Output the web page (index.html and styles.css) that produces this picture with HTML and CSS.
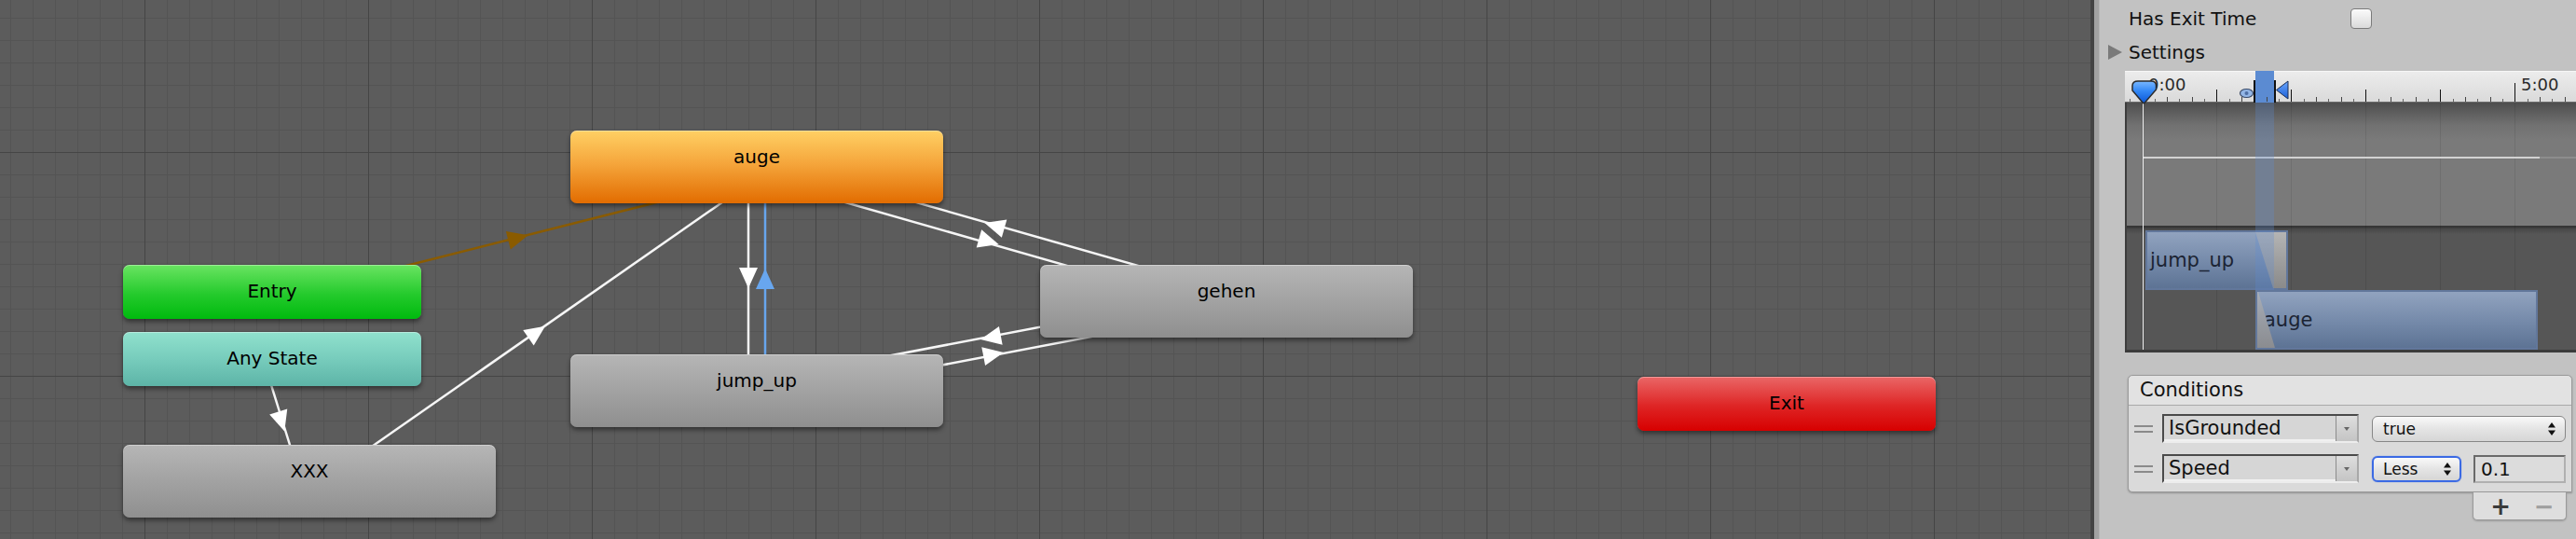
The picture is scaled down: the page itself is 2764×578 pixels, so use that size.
FILE: index.html
```html
<!DOCTYPE html>
<html>
<head>
<meta charset="utf-8">
<title>Animator</title>
<link rel="stylesheet" href="styles.css">
</head>
<body>
<div class="graph">
  <svg class="edges" width="2243" height="578" viewBox="0 0 2243 578">
    <g class="line-white">
      <line x1="287" y1="400" x2="315" y2="490"/>
      <line x1="383" y1="490" x2="792" y2="205"/>
      <line x1="803" y1="200" x2="803" y2="400"/>
      <line x1="809" y1="189" x2="1313" y2="333"/>
      <line x1="815" y1="169" x2="1319" y2="313"/>
      <line x1="810" y1="409" x2="1314" y2="313"/>
      <line x1="814" y1="429" x2="1318" y2="333"/>
    </g>
    <line class="line-brown" x1="400" y1="294" x2="760" y2="203"/>
    <line class="line-blue" x1="821" y1="200" x2="821" y2="400"/>
    <g class="head-white">
      <polygon points="11,0 -11,-10 -11,10" transform="translate(302 452) rotate(72.6)"/>
      <polygon points="11,0 -11,-10 -11,10" transform="translate(576 356) rotate(-34.9)"/>
      <polygon points="11,0 -11,-10 -11,10" transform="translate(803 298) rotate(90)"/>
      <polygon points="11,0 -11,-10 -11,10" transform="translate(1061 259) rotate(15.9)"/>
      <polygon points="11,0 -11,-10 -11,10" transform="translate(1067 242) rotate(195.9)"/>
      <polygon points="11,0 -11,-10 -11,10" transform="translate(1063 362) rotate(169.2)"/>
      <polygon points="11,0 -11,-10 -11,10" transform="translate(1066 380) rotate(-10.8)"/>
    </g>
    <polygon class="head-brown" points="11,0 -11,-10 -11,10" transform="translate(556 255) rotate(-14.2)"/>
    <polygon class="head-blue" points="11,0 -11,-10 -11,10" transform="translate(821 299) rotate(-90)"/>
  </svg>

  <div class="node orange n-auge">auge</div>
  <div class="node grey n-jump">jump_up</div>
  <div class="node grey n-gehen">gehen</div>
  <div class="node grey n-xxx">XXX</div>
  <div class="node small green n-entry">Entry</div>
  <div class="node small teal n-any">Any State</div>
  <div class="node small red n-exit">Exit</div>
</div>

<div class="panel">
  <div class="panel-edge"></div>
  <div class="panel-body">
    <div class="prop-row">
      <span class="prop-label">Has Exit Time</span>
      <span class="checkbox"></span>
    </div>
    <div class="foldout">
      <span class="fold-tri"></span>
      <span>Settings</span>
    </div>

    <div class="timeline">
      <div class="ruler">
        <span class="tick-label l0">0:00</span>
        <span class="tick-label l5">5:00</span>
        <svg class="ruler-svg" width="484" height="36" viewBox="0 0 484 36">
          <defs>
            <linearGradient id="shield" x1="0" y1="0" x2="0" y2="1">
              <stop offset="0" stop-color="#7ab8ff"/>
              <stop offset="0.45" stop-color="#3388f5"/>
              <stop offset="1" stop-color="#0b56d6"/>
            </linearGradient>
            <linearGradient id="tri" x1="0" y1="0" x2="0" y2="1">
              <stop offset="0" stop-color="#6aa6ff"/>
              <stop offset="1" stop-color="#1b5fd6"/>
            </linearGradient>
          </defs>
          <rect x="140" y="0" width="20" height="34" fill="#5b8bd2"/>
          <path class="tick-short" d="M5.5 30v3M32.5 30v3M58.5 30v3M85.5 30v3M112.5 30v3M138.5 30v3M165.5 30v3M192.5 30v3M218.5 30v3M245.5 30v3M272.5 30v3M298.5 30v3M325.5 30v3M352.5 30v3M378.5 30v3M405.5 30v3M432.5 30v3M458.5 30v3"/>
          <path class="tick-med" d="M45.5 28v5M72.5 28v5M125.5 28v5M152.5 28v5M205.5 28v5M232.5 28v5M285.5 28v5M312.5 28v5M365.5 28v5M392.5 28v5M445.5 28v5M472.5 28v5"/>
          <path class="tick-major" d="M98.5 20v13M178.5 20v13M258.5 20v13M338.5 20v13M18.5 13v20M418.5 13v20"/>
          <rect x="138" y="10" width="2" height="24" fill="#111"/>
          <rect x="160" y="10" width="2" height="24" fill="#111"/>
          <ellipse cx="130.5" cy="24" rx="7" ry="4.5" fill="#93b6e6" stroke="#3b4b68" stroke-width="1.2"/>
          <circle cx="130.5" cy="24" r="2" fill="#4f6fa4"/>
          <polygon points="162.5,20.5 175,11 175,30" fill="url(#tri)" stroke="#1a2d55" stroke-width="1"/>
          <path d="M8 16 C8 12.5 10.5 11 14 11 L28 11 C31.5 11 33.5 12.5 33.5 16 L33.5 20 L21 34.5 L19.5 34.5 L8 21 Z" fill="url(#shield)" stroke="#2b2b2b" stroke-width="1.5"/>
        </svg>
      </div>
      <div class="curves">
        <div class="curve-line"></div>
      </div>
      <div class="clip-area">
        <div class="clip clip-jump">jump_up<span class="trans-out"></span></div>
        <div class="clip clip-auge"><span class="trans-in"></span>auge</div>
      </div>
      <div class="sel-col"></div>
      <div class="playhead"></div>
    </div>

    <div class="conditions">
      <div class="cond-header">Conditions</div>
      <div class="cond-list">
        <div class="cond-row">
          <span class="handle"></span>
          <div class="param">
            <span class="param-text">IsGrounded</span>
            <span class="param-btn"><span class="mini-tri"></span></span>
          </div>
          <div class="popup popup-wide">
            <span>true</span>
            <svg class="updown" width="8" height="14" viewBox="0 0 8 14"><path d="M4 0L8 5.5H0ZM4 14L8 8.5H0Z"/></svg>
          </div>
        </div>
        <div class="cond-row">
          <span class="handle"></span>
          <div class="param">
            <span class="param-text">Speed</span>
            <span class="param-btn"><span class="mini-tri"></span></span>
          </div>
          <div class="popup popup-less">
            <span>Less</span>
            <svg class="updown" width="8" height="14" viewBox="0 0 8 14"><path d="M4 0L8 5.5H0ZM4 14L8 8.5H0Z"/></svg>
          </div>
          <div class="float-field">0.1</div>
        </div>
      </div>
    </div>
    <div class="cond-footer">
      <span class="plus">+</span>
      <span class="minus">−</span>
    </div>
  </div>
</div>
</body>
</html>
```

FILE: styles.css
```css
* { box-sizing: border-box; }
html, body { margin: 0; padding: 0; }
body {
  width: 2764px;
  height: 578px;
  overflow: hidden;
  display: flex;
  font-family: "DejaVu Sans", "Liberation Sans", sans-serif;
  background: #5c5c5c;
}

/* ---------- graph canvas ---------- */
.graph {
  position: relative;
  flex: 0 0 2243px;
  height: 578px;
  background-color: #5c5c5c;
  background-image:
    linear-gradient(to right, #454545 1px, transparent 1px),
    linear-gradient(to bottom, #454545 1px, transparent 1px),
    linear-gradient(to right, #545454 1px, transparent 1px),
    linear-gradient(to bottom, #545454 1px, transparent 1px);
  background-size: 240px 240px, 240px 240px, 24px 24px, 24px 24px;
  background-position: 155px 0, 0 163px, 11px 0, 0 19px;
}
.edges { position: absolute; left: 0; top: 0; }
.line-white line { stroke: #f6f6f6; stroke-width: 2.5; }
.line-brown { stroke: #8a5b00; stroke-width: 2.5; }
.line-blue { stroke: #68a6ee; stroke-width: 2.5; }
.head-white polygon { fill: #ffffff; }
.head-brown { fill: #8a5b00; }
.head-blue { fill: #68a6ee; }

.node {
  position: absolute;
  width: 400px;
  height: 78px;
  border-radius: 7px;
  text-align: center;
  font-size: 20px;
  line-height: 56px;
  color: #000;
  box-shadow: 0 3px 5px rgba(0, 0, 0, 0.45), inset 0 1px 0 rgba(255, 255, 255, 0.35);
}
.node.small { width: 320px; height: 58px; }
.grey { background: linear-gradient(#b6b6b6, #a4a4a4 45%, #8f8f8f); }
.orange { background: linear-gradient(#ffd064, #f5a63c 45%, #e26c00); }
.green { background: linear-gradient(#6ae462, #24ca2c 55%, #00ba0e); }
.teal { background: linear-gradient(#90e1cd, #77ccbc 50%, #5db4a7); }
.red { background: linear-gradient(#ea6767, #de2424 55%, #d70000); }

.n-auge { left: 612px; top: 140px; }
.n-jump { left: 612px; top: 380px; }
.n-gehen { left: 1116px; top: 284px; }
.n-xxx { left: 132px; top: 477px; }
.n-entry { left: 132px; top: 284px; }
.n-any { left: 132px; top: 356px; }
.n-exit { left: 1757px; top: 404px; }

/* ---------- inspector panel ---------- */
.panel {
  flex: 1;
  min-width: 0;
  display: flex;
  background: #c2c2c2;
  border-left: 4px solid #434343;
}
.panel-edge {
  flex: 0 0 6px;
  background: #a2a2a2;
  border-right: 1px solid #b5b5b5;
}
.panel-body {
  flex: 1;
  min-width: 0;
  display: flex;
  flex-direction: column;
  color: #111;
}
.prop-row {
  height: 40px;
  display: flex;
  align-items: center;
  padding-left: 31px;
  font-size: 20px;
}
.prop-label { width: 238px; }
.checkbox {
  width: 23px;
  height: 22px;
  border: 1px solid #7a7a7a;
  border-radius: 4px;
  background: linear-gradient(#fbfbfb, #dadada);
}
.foldout {
  height: 32px;
  display: flex;
  align-items: center;
  padding-left: 9px;
  font-size: 20px;
}
.fold-tri {
  width: 0;
  height: 0;
  border-left: 15px solid #7a7a7a;
  border-top: 8px solid transparent;
  border-bottom: 8px solid transparent;
  margin-right: 7px;
}

/* timeline */
.timeline {
  position: relative;
  margin: 4px 0 0 27px;
  flex: none;
}
.ruler {
  position: relative;
  height: 34px;
  background: linear-gradient(#ececec, #dadada);
  border-top: 1px solid #f7f7f7;
  border-bottom: 1px solid #6a6a6a;
}
.ruler-svg { position: absolute; left: 0; top: -1px; z-index: 2; }
.tick-short { stroke: #666; stroke-width: 1; }
.tick-med { stroke: #444; stroke-width: 1; }
.tick-major { stroke: #111; stroke-width: 1; }
.tick-label {
  position: absolute;
  top: 5px;
  font-size: 18px;
  line-height: 18px;
  color: #2a2a2a;
}
.l0 { left: 25px; }
.l5 { left: 425px; }

.curves {
  height: 132px;
  padding-top: 58px;
  background:
    linear-gradient(to right, rgba(0, 0, 0, 0.09) 1px, transparent 1px) 18px 0 / 80px 100% repeat-x,
    linear-gradient(#4e4e4e, #717171 24px, #7a7a7a 40px, #7a7a7a);
  box-shadow: inset 2px 0 0 #3d3d3d;
}
.curve-line {
  margin-left: 19px;
  height: 2px;
  background: linear-gradient(to right, #d2d2d2 426px, #8d8d8d 426px);
}
.clip-area {
  position: relative;
  height: 136px;
  border-bottom: 3px solid #3b3b3b;
  background:
    linear-gradient(to right, rgba(0, 0, 0, 0.1) 1px, transparent 1px) 18px 0 / 80px 100% repeat-x,
    linear-gradient(#363636 0, #363636 2px, #474747 3px, #565656 9px, #565656);
  box-shadow: inset 2px 0 0 #3d3d3d;
}
.clip {
  position: absolute;
  height: 64px;
  border: 2px solid #62779b;
  background: linear-gradient(#91a3bf, #7489a9 55%, #5d7394);
  font-size: 21px;
  line-height: 60px;
  color: #1c2433;
  overflow: hidden;
}
.clip-jump { left: 22px; top: 5px; width: 153px; padding-left: 3px; }
.clip-auge { left: 140px; top: 69px; width: 303px; padding-left: 7px; }
.trans-out {
  position: absolute;
  left: 116px;
  top: 0;
  bottom: 0;
  width: 33px;
  background: linear-gradient(#b4b4b4, #8a8a8a);
  clip-path: polygon(0 0, 100% 0, 100% 100%, 19px 100%);
}
.trans-in {
  position: absolute;
  left: 0;
  top: 0;
  bottom: 0;
  width: 19px;
  background: linear-gradient(#a7adb7, #8a8c90);
  clip-path: polygon(0 0, 1px 0, 100% 100%, 0 100%);
}
.sel-col {
  position: absolute;
  left: 140px;
  top: 34px;
  width: 20px;
  height: 201px;
  background: rgba(92, 140, 212, 0.28);
}
.playhead {
  position: absolute;
  left: 19px;
  top: 34px;
  bottom: 3px;
  width: 1px;
  background: #f2f2f2;
}

/* conditions */
.conditions {
  margin: 24px 4px 0 30px;
  background: #dadada;
  border: 1px solid #9a9a9a;
  border-radius: 5px 5px 0 5px;
  box-shadow: 0 1px 2px rgba(0, 0, 0, 0.25);
  flex: none;
}
.cond-header {
  height: 32px;
  padding-left: 12px;
  font-size: 21px;
  line-height: 31px;
  background: #e2e2e2;
  border-bottom: 1px solid #a9a9a9;
  border-radius: 5px 5px 0 0;
}
.cond-list {
  padding: 9px 6px 9px 6px;
  display: flex;
  flex-direction: column;
  gap: 12px;
}
.cond-row {
  display: flex;
  align-items: center;
  height: 31px;
}
.handle {
  width: 20px;
  height: 8px;
  border-top: 2px solid #8a8a8a;
  border-bottom: 2px solid #8a8a8a;
  margin-right: 10px;
  flex: none;
}
.param {
  width: 211px;
  height: 31px;
  display: flex;
  border: 2px solid;
  border-color: #4a4a4a #a8a8a8 #ededed #4a4a4a;
  background: #d6d6d6;
  flex: none;
}
.param-text {
  flex: 1;
  padding-left: 5px;
  font-size: 21px;
  line-height: 26px;
  border-bottom: 2px solid #f0f0f0;
}
.param-btn {
  width: 23px;
  border-left: 1px solid #8c8c8c;
  background: linear-gradient(#dedede, #c4c4c4);
  display: flex;
  align-items: center;
  justify-content: center;
}
.mini-tri {
  width: 0;
  height: 0;
  border-top: 4px solid #666;
  border-left: 3px solid transparent;
  border-right: 3px solid transparent;
}
.popup {
  margin-left: 14px;
  height: 28px;
  display: flex;
  align-items: center;
  justify-content: space-between;
  padding: 0 10px 0 11px;
  border: 1px solid #868686;
  border-radius: 6px;
  background: linear-gradient(#f9f9f9, #e4e4e4 50%, #d6d6d6);
  font-size: 17px;
  color: #111;
  flex: none;
}
.popup-wide { width: 208px; }
.popup-less {
  width: 96px;
  border: 2px solid #3b6ae4;
  padding: 0 9px 0 10px;
  box-shadow: 0 0 1px #3b6ae4;
}
.updown { fill: #111; }
.float-field {
  margin-left: 13px;
  width: 99px;
  height: 30px;
  border: 2px solid;
  border-color: #6a6a6a #b0b0b0 #b0b0b0 #6a6a6a;
  background: #dcdcdc;
  font-size: 20px;
  line-height: 26px;
  padding-left: 6px;
  flex: none;
}
.cond-footer {
  align-self: flex-end;
  margin-right: 10px;
  width: 101px;
  height: 30px;
  display: flex;
  align-items: center;
  padding-left: 6px;
  background: #dedede;
  border: 1px solid #9a9a9a;
  border-top: none;
  border-radius: 0 0 5px 5px;
  box-shadow: 0 1px 2px rgba(0, 0, 0, 0.2);
}
.plus, .minus {
  width: 50px;
  text-align: center;
  font-size: 26px;
  line-height: 28px;
  font-weight: bold;
}
.plus { color: #3a3a3a; }
.minus { color: #9e9e9e; }
```
